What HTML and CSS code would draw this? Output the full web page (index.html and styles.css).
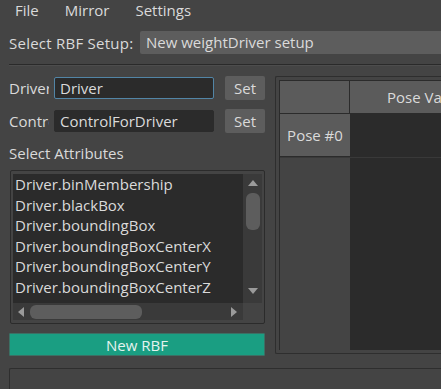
FILE: index.html
```html
<!DOCTYPE html>
<html lang="en">

<head>
    <meta charset="UTF-8">
    <title>RBF Manager</title>
    <link rel="stylesheet" href="styles.css">
</head>

<body>
    <!-- Menu -->
    <div class="menubar">
        <span class="menu-item">File</span>
        <span class="menu-item">Mirror</span>
        <span class="menu-item">Settings</span>
    </div>

    <!-- Setup selection -->
    <div class="setup-row">
        <span class="setup-label">Select RBF Setup:</span>
        <div class="combo">New weightDriver setup</div>
    </div>
    <div class="separator"></div>

    <div class="main">
        <div class="left-col">
            <div class="field-row">
                <span class="field-label">Driver</span>
                <input class="field-input focused" value="Driver">
                <button class="set-btn">Set</button>
            </div>
            <div class="field-row">
                <span class="field-label">Control</span>
                <input class="field-input" value="ControlForDriver">
                <button class="set-btn">Set</button>
            </div>
            <div class="section-label">Select Attributes</div>

            <div class="listbox">
                <div class="list-area">
                    <div class="list-items">
                        <div class="list-item">Driver.binMembership</div>
                        <div class="list-item">Driver.blackBox</div>
                        <div class="list-item">Driver.boundingBox</div>
                        <div class="list-item">Driver.boundingBoxCenterX</div>
                        <div class="list-item">Driver.boundingBoxCenterY</div>
                        <div class="list-item">Driver.boundingBoxCenterZ</div>
                    </div>
                    <div class="vscroll">
                        <div class="arrow-up"></div>
                        <div class="vthumb"></div>
                        <div class="arrow-down"></div>
                    </div>
                </div>
                <div class="hscroll">
                    <div class="arrow-left"></div>
                    <div class="hthumb"></div>
                    <div class="arrow-right"></div>
                </div>
            </div>

            <button class="new-btn">New RBF</button>
        </div>

        <div class="right-panel">
            <div class="pose-table">
                <div class="table-head">
                    <div class="corner"></div>
                    <div class="col-head">Pose Values</div>
                </div>
                <div class="table-row">
                    <div class="row-head">Pose #0</div>
                    <div class="cell"></div>
                </div>
                <div class="table-rest">
                    <div class="rest-head"></div>
                    <div class="cell"></div>
                </div>
            </div>
        </div>
    </div>

    <div class="bottom-box"></div>
</body>

</html>
```

FILE: styles.css
```css
body {
    font-family: 'Open Sans', 'Noto Sans', sans-serif;
    font-size: 15px;
    background-color: #444444;
    color: #dadada;
    margin: 0;
    width: 441px;
    height: 389px;
    overflow: hidden;
}

.menubar {
    display: flex;
    height: 20px;
    line-height: 20px;
    padding-left: 15px;
    gap: 26px;
}

.setup-row {
    display: flex;
    align-items: center;
    margin-top: 11px;
    padding-left: 9px;
    height: 23px;
}

.setup-label {
    width: 131px;
    letter-spacing: 0.25px;
    white-space: nowrap;
}

.combo {
    flex: 1;
    height: 23px;
    line-height: 23px;
    background-color: #5d5d5d;
    border-radius: 2px 0 0 2px;
    padding-left: 6px;
    white-space: nowrap;
}

.separator {
    margin: 10px 0 0 9px;
    height: 1px;
    background-color: #2a2a2a;
    border-bottom: 1px solid #4d4d4d;
}

.main {
    display: flex;
    margin-top: 10px;
    padding-left: 9px;
}

.left-col {
    width: 256px;
    display: flex;
    flex-direction: column;
}

.field-row {
    display: flex;
    align-items: center;
    height: 24px;
    margin-bottom: 9px;
}

.field-label {
    width: 40px;
    margin-right: 5px;
    overflow: hidden;
    white-space: nowrap;
}

.field-input {
    width: 160px;
    height: 22px;
    box-sizing: border-box;
    background-color: #2b2b2b;
    border: 1px solid #2b2b2b;
    border-radius: 2px;
    color: #dadada;
    font-family: inherit;
    font-size: 15px;
    padding: 0 5px;
    outline: none;
}

.field-input.focused {
    border-color: #5285a6;
}

.set-btn {
    margin-left: 11px;
    width: 40px;
    height: 24px;
    background-color: #5d5d5d;
    border: none;
    border-radius: 2px;
    color: #dadada;
    font-family: inherit;
    font-size: 15px;
    padding: 0;
}

.section-label {
    margin-top: 0;
    height: 28px;
    line-height: 22px;
}

.listbox {
    margin-left: 1px;
    height: 154px;
    box-sizing: border-box;
    border: 1px solid #2b2b2b;
    border-radius: 2px;
    padding: 3px 2px 3px 2px;
    display: flex;
    flex-direction: column;
}

.list-area {
    display: flex;
    flex: 1;
    background-color: #2b2b2b;
    overflow: hidden;
}

.list-items {
    flex: 1;
    padding: 0 0 0 2px;
    white-space: nowrap;
    overflow: hidden;
}

.list-item {
    height: 20.5px;
    line-height: 20px;
}

.vscroll {
    width: 19px;
    background-color: #3a3a3a;
}

.arrow-up {
    margin: 6px auto 0;
    width: 0;
    height: 0;
    border-left: 5px solid transparent;
    border-right: 5px solid transparent;
    border-bottom: 6px solid #9a9a9a;
}

.vthumb {
    margin: 7px auto 0;
    width: 14px;
    height: 37px;
    background-color: #5d5d5d;
    border-radius: 6px;
}

.arrow-down {
    margin: 58px auto 0;
    width: 0;
    height: 0;
    border-left: 5px solid transparent;
    border-right: 5px solid transparent;
    border-top: 6px solid #9a9a9a;
}

.hscroll {
    height: 17px;
    margin-right: 19px;
    background-color: #3a3a3a;
    display: flex;
    align-items: center;
    padding-left: 5px;
}

.arrow-left {
    width: 0;
    height: 0;
    border-top: 5px solid transparent;
    border-bottom: 5px solid transparent;
    border-right: 6px solid #9a9a9a;
}

.hthumb {
    margin-left: 6px;
    width: 112px;
    height: 14px;
    background-color: #5d5d5d;
    border-radius: 6px;
}

.arrow-right {
    margin-left: auto;
    margin-right: 6px;
    width: 0;
    height: 0;
    border-top: 5px solid transparent;
    border-bottom: 5px solid transparent;
    border-left: 6px solid #9a9a9a;
}

.new-btn {
    margin-top: 9px;
    height: 23px;
    background-color: #1a9e82;
    border: 1px solid #3c6f64;
    border-radius: 1px;
    color: #e4f3ef;
    font-family: inherit;
    font-size: 15px;
    line-height: 20px;
    padding: 0;
}

.right-panel {
    margin-left: 10px;
    flex: 1;
    height: 278px;
    box-sizing: border-box;
    border: 1px solid #2e2e2e;
    border-right: none;
    border-radius: 2px 0 0 2px;
    padding: 3px 0 3px 3px;
    display: flex;
}

.pose-table {
    flex: 1;
    display: flex;
    flex-direction: column;
    border: 1px solid #2b2b2b;
    border-right: none;
    border-bottom: none;
}

.table-head {
    display: flex;
    height: 32px;
    border-bottom: 1px solid #2b2b2b;
}

.corner {
    width: 69px;
    background-color: #5b5b5b;
    border-right: 1px solid #2b2b2b;
}

.col-head {
    flex: 1;
    background-color: #5b5b5b;
    padding-left: 37px;
    line-height: 32px;
    white-space: nowrap;
    overflow: hidden;
}

.table-row {
    display: flex;
    height: 43px;
    border-bottom: 1px solid #393939;
}

.row-head {
    width: 70px;
    background-color: #5b5b5b;
    line-height: 43px;
    text-align: center;
    box-sizing: border-box;
    border-bottom: 1px solid #2b2b2b;
}

.cell {
    flex: 1;
    background-color: #2b2b2b;
}

.table-rest {
    flex: 1;
    display: flex;
}

.rest-head {
    width: 70px;
    background-color: #444444;
}

.bottom-box {
    margin: 12px 0 0 9px;
    height: 20px;
    border: 1px solid #2e2e2e;
    border-right: none;
    border-bottom: none;
    border-radius: 2px 0 0 0;
}
```
